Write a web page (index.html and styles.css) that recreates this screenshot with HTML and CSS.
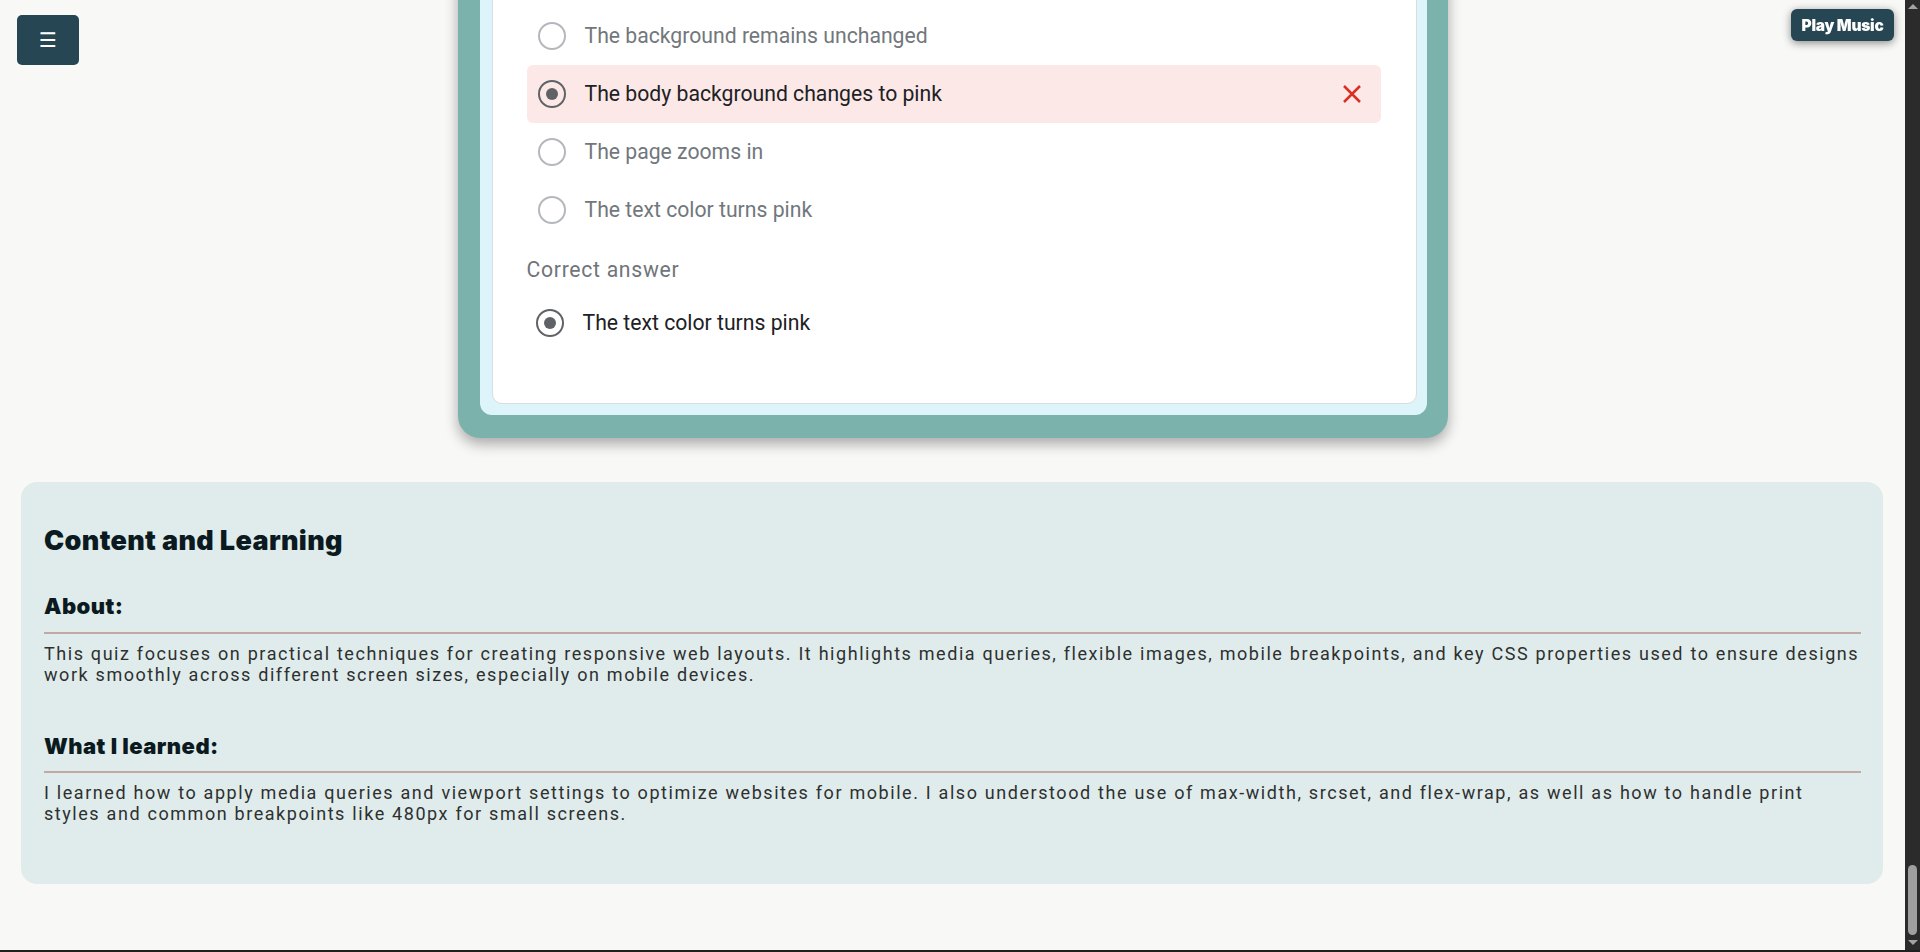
FILE: index.html
```html
<!DOCTYPE html>
<html lang="en">
<head>
<meta charset="utf-8">
<title>Responsive Design Quiz</title>
<link rel="stylesheet" href="styles.css">
</head>
<body>
<button class="menu-btn" aria-label="Menu">☰</button>
<button class="music-btn">Play Music</button>
<div class="viewport">
  <main class="page">
    <section class="quiz-frame">
      <div class="quiz-bg">
        <div class="quiz-card">
          <div class="options">
            <div class="option">
              <span class="radio"></span>
              <span class="option-text">The background remains unchanged</span>
            </div>
            <div class="option option-wrong">
              <span class="radio radio-checked"></span>
              <span class="option-text">The body background changes to pink</span>
              <svg class="wrong-icon" viewBox="0 0 20 20" width="20" height="20" aria-hidden="true">
                <path d="M2 2 L18 18 M18 2 L2 18" stroke="#d93025" stroke-width="2.5" fill="none"/>
              </svg>
            </div>
            <div class="option">
              <span class="radio"></span>
              <span class="option-text">The page zooms in</span>
            </div>
            <div class="option">
              <span class="radio"></span>
              <span class="option-text">The text color turns pink</span>
            </div>
          </div>
          <div class="correct-label">Correct answer</div>
          <div class="option option-correct">
            <span class="radio radio-checked"></span>
            <span class="option-text">The text color turns pink</span>
          </div>
        </div>
      </div>
    </section>

    <section class="content-panel">
      <h2 class="panel-title">Content and Learning</h2>
      <h3 class="panel-sub">About:</h3>
      <p class="panel-text">This quiz focuses on practical techniques for creating responsive web layouts. It highlights media queries, flexible images, mobile breakpoints, and key CSS properties used to ensure designs work smoothly across different screen sizes, especially on mobile devices.</p>
      <h3 class="panel-sub panel-sub-gap">What I learned:</h3>
      <p class="panel-text">I learned how to apply media queries and viewport settings to optimize websites for mobile. I also understood the use of max-width, srcset, and flex-wrap, as well as how to handle print styles and common breakpoints like 480px for small screens.</p>
    </section>
  </main>
  <div class="scrollbar" aria-hidden="true">
    <span class="sb-arrow sb-up"></span>
    <span class="sb-thumb"></span>
    <span class="sb-arrow sb-down"></span>
  </div>
</div>
</body>
</html>
```

FILE: styles.css
```css
html, body {
  margin: 0;
  padding: 0;
  height: 100%;
}

body {
  background: #f8f8f6;
  overflow: hidden;
  font-family: Roboto, "Liberation Sans", sans-serif;
}

.viewport {
  display: flex;
  height: 950px;
  border-bottom: 2px solid #1f1f1f;
}

.page {
  flex: 1;
  display: flex;
  flex-direction: column;
  justify-content: flex-end;
  overflow: hidden;
  padding-bottom: 66px;
}

/* Fixed overlay buttons */
.menu-btn {
  position: fixed;
  left: 17px;
  top: 15px;
  width: 62px;
  height: 50px;
  border: none;
  border-radius: 5px;
  background: #264653;
  color: #ffffff;
  font-family: "DejaVu Sans", sans-serif;
  font-size: 20px;
  line-height: 50px;
  padding: 0;
  z-index: 10;
}

.music-btn {
  position: fixed;
  top: 9px;
  right: 26px;
  width: 103px;
  height: 32px;
  border: none;
  border-radius: 6px;
  background: #264653;
  color: #ffffff;
  font-family: Inter, "Liberation Sans", sans-serif;
  font-weight: 900;
  font-size: 15.5px;
  letter-spacing: -0.25px;
  padding: 0;
  box-shadow: 0 2px 9px rgba(0, 0, 0, 0.45);
  z-index: 10;
}

/* Quiz frame */
.quiz-frame {
  align-self: center;
  width: 990px;
  box-sizing: border-box;
  padding: 22px 21px 23px 22px;
  background: #7bb2ac;
  border-radius: 22px;
  box-shadow: 0 6px 14px rgba(0, 0, 0, 0.32);
  margin-bottom: 44px;
  flex-shrink: 0;
}

.quiz-bg {
  background: #ddf5fa;
  padding: 12px 10px 11px 12px;
  border-radius: 12px;
}

.quiz-card {
  background: #ffffff;
  border: 1px solid #dadce0;
  border-radius: 10px;
  padding: 40px 35px 56px 34px;
}

.option {
  display: flex;
  align-items: center;
  gap: 19px;
  height: 58px;
  padding: 0 19px 0 11px;
  border-radius: 6px;
  font-size: 21.2px;
  color: #72777c;
}

.option-text {
  flex: 1;
}

.option-wrong {
  background: #fce8e6;
  color: #202124;
}

.wrong-icon {
  flex-shrink: 0;
}

.radio {
  width: 28px;
  height: 28px;
  box-sizing: border-box;
  border: 2.5px solid #b4b8bc;
  border-radius: 50%;
  display: flex;
  align-items: center;
  justify-content: center;
  flex-shrink: 0;
}

.radio-checked {
  border-color: #5f6368;
}

.radio-checked::after {
  content: "";
  width: 12px;
  height: 12px;
  border-radius: 50%;
  background: #5f6368;
}

.correct-label {
  margin-top: 19px;
  font-size: 21.2px;
  line-height: 24px;
  letter-spacing: 0.7px;
  color: #70757a;
}

.option-correct {
  margin-top: 17px;
  height: 48px;
  padding-left: 9px;
  color: #202124;
}

/* Content panel */
.content-panel {
  margin: 0 22px 0 21px;
  background: #dfeceb;
  border-radius: 16px;
  padding: 43px 22px 60px 23px;
  flex-shrink: 0;
}

.panel-title {
  margin: 0 0 36px;
  font-family: Inter, "Liberation Sans", sans-serif;
  font-weight: 900;
  font-size: 27px;
  line-height: 1.2;
  letter-spacing: 0.35px;
  color: #0b1a20;
}

.panel-sub {
  margin: 0;
  font-family: Inter, "Liberation Sans", sans-serif;
  font-weight: 900;
  font-size: 22px;
  line-height: 1.2;
  letter-spacing: 0.45px;
  color: #0b1a20;
  padding-bottom: 12px;
  border-bottom: 2px solid #c4a8a6;
}

.panel-sub-gap {
  margin-top: 48px;
}

.panel-text {
  margin: 9px 0 0;
  font-family: Roboto, "Liberation Sans", sans-serif;
  font-size: 18px;
  line-height: 21px;
  letter-spacing: 1.55px;
  word-spacing: 0.33px;
  color: #2e3030;
}

/* Fake browser scrollbar */
.scrollbar {
  width: 15px;
  flex-shrink: 0;
  background: #2b2b2b;
  display: flex;
  flex-direction: column;
  align-items: center;
}

.sb-arrow {
  width: 0;
  height: 0;
  border-left: 5px solid transparent;
  border-right: 5px solid transparent;
}

.sb-up {
  margin-top: 4px;
  border-bottom: 5px solid #a3a3a3;
}

.sb-thumb {
  margin-top: auto;
  width: 9px;
  height: 70px;
  border-radius: 5px;
  background: #9f9f9f;
}

.sb-down {
  margin-top: 5px;
  margin-bottom: 5px;
  border-top: 5px solid #a3a3a3;
}
```
